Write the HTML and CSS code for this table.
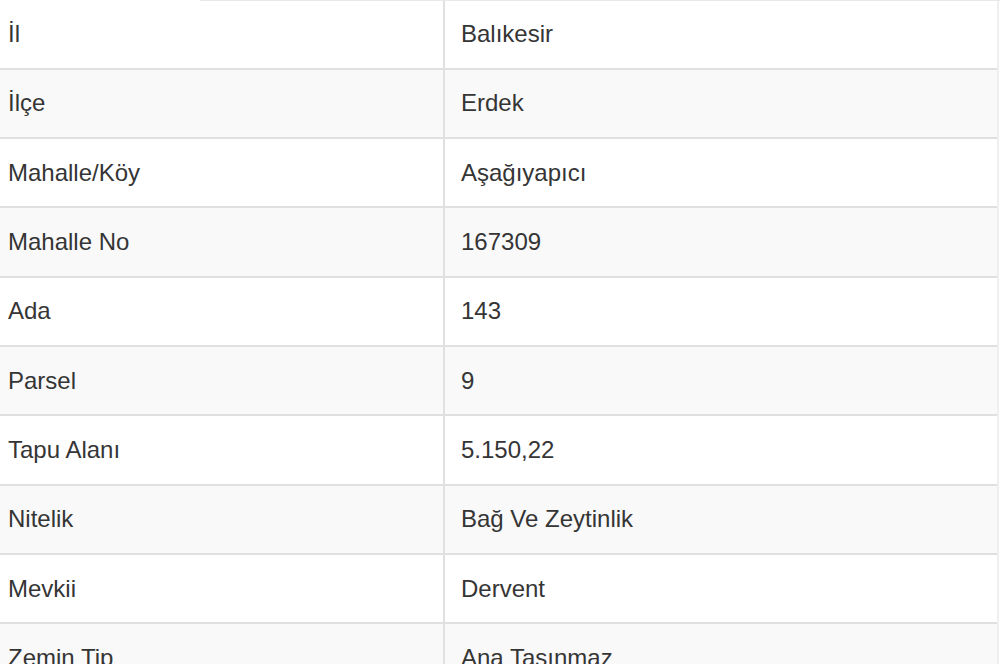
FILE: index.html
```html
<!DOCTYPE html>
<html lang="tr">
<head>
<meta charset="utf-8">
<title>Parsel Bilgileri</title>
<link rel="stylesheet" href="styles.css">
</head>
<body>
<div class="topline"></div>
<div class="table">
  <div class="row"><div class="key">İl</div><div class="val">Balıkesir</div></div>
  <div class="row"><div class="key">İlçe</div><div class="val">Erdek</div></div>
  <div class="row"><div class="key">Mahalle/Köy</div><div class="val">Aşağıyapıcı</div></div>
  <div class="row"><div class="key">Mahalle No</div><div class="val">167309</div></div>
  <div class="row"><div class="key">Ada</div><div class="val">143</div></div>
  <div class="row"><div class="key">Parsel</div><div class="val">9</div></div>
  <div class="row"><div class="key">Tapu Alanı</div><div class="val">5.150,22</div></div>
  <div class="row"><div class="key">Nitelik</div><div class="val">Bağ Ve Zeytinlik</div></div>
  <div class="row"><div class="key">Mevkii</div><div class="val">Dervent</div></div>
  <div class="row"><div class="key">Zemin Tip</div><div class="val">Ana Taşınmaz</div></div>
</div>
</body>
</html>
```
FILE: styles.css
```css
html, body {
  margin: 0;
  padding: 0;
  background: #ffffff;
  overflow: hidden;
  width: 1000px;
  height: 664px;
}
body {
  font-family: "Liberation Sans", Arial, sans-serif;
  font-size: 24px;
  color: #353535;
}
.topline {
  height: 1px;
  margin-left: 200px;
  background: #e8e8e8;
}
.table {
  width: 997px;
  border-right: 2px solid #efefef;
  display: flex;
  flex-direction: column;
}
.row {
  display: grid;
  grid-template-columns: 445px 1fr;
  height: 69.35px;
  box-sizing: border-box;
  border-bottom: 2px solid #e0e0e0;
  align-items: center;
}
.row:first-child {
  height: 68.6px;
}
.row:nth-child(even) {
  background: #f9f9f9;
}
.key {
  height: 100%;
  display: flex;
  align-items: center;
  padding-left: 8px;
  box-sizing: border-box;
  border-right: 2px solid #e0e0e0;
}
.val {
  padding-left: 16px;
}
```
